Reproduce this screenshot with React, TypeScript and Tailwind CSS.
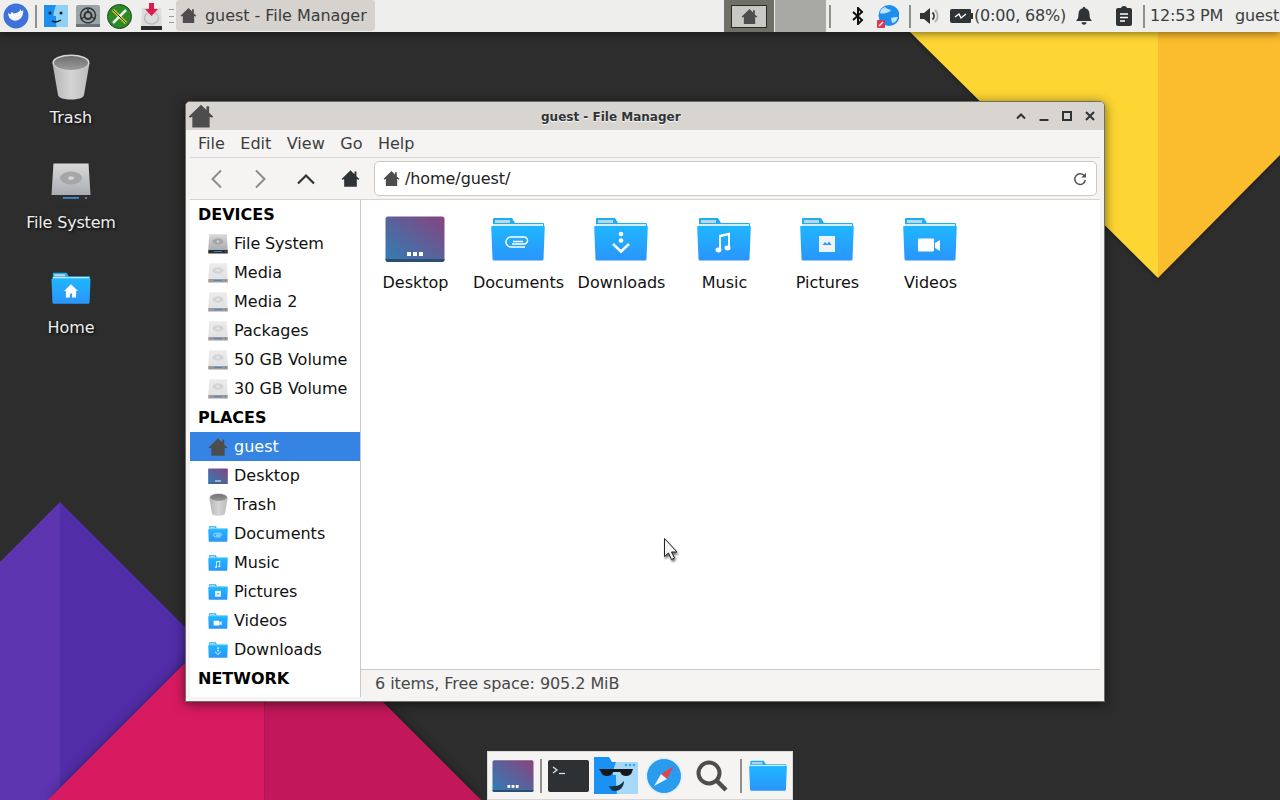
import { useId } from "react"

function Wallpaper() {
  return (
    <svg className="absolute inset-0" width="1280" height="800" viewBox="0 0 1280 800">
      <polygon points="60,502 0,562 0,800 60,800" fill="#5e35b1" />
      <polygon points="60,502 360,802 60,802" fill="#512da8" />
      <g className="drop-shadow-[0_0_6px_rgba(0,0,0,0.35)]">
        <polygon points="264.5,583.5 48,800 264.5,800" fill="#d81b60" />
        <polygon points="264.5,583.5 481,800 264.5,800" fill="#c2185b" />
      </g>
      <g className="drop-shadow-[0_1px_2px_rgba(0,0,0,0.4)]">
        <polygon points="910,32 1158,278 1158,32" fill="#fdd633" />
        <polygon points="1158,32 1158,278 1280,155 1280,32" fill="#fbbc2d" />
      </g>
    </svg>
  )
}

function HomeIcon({ size = 24, color = "#4d4d4d", className = "" }: { size?: number; color?: string; className?: string }) {
  return (
    <svg width={size} height={size} viewBox="0 0 24 24" className={className}>
      <path d="M12 1.500 .8 12.500l.9 1 2.300-.7V22.500h16V12.800l2.300.7.900-1L19.500 9V3H17v3.500z" fill={color} />
    </svg>
  )
}

function FolderGlyph({ kind }: { kind: string }) {
  const w = "#ffffff"
  if (kind === "clip")
    return <path d="M21 27.500h12a3.500 3.500 0 0 0 0-7H20a5 5 0 0 0 0 10h14M22 25h10" fill="none" stroke={w} strokeWidth="1.500" transform="translate(0,-.5)" />
  if (kind === "down")
    return (
      <g fill={w}>
        <circle cx="27" cy="17" r="2.300" />
        <circle cx="27" cy="23.500" r="2.300" />
        <path d="M19 27l8 7.500 8-7.500" fill="none" stroke={w} strokeWidth="2.400" />
      </g>
    )
  if (kind === "music")
    return (
      <g fill={w}>
        <path d="M22 18l11-2.500v15h-2v-12l-7 1.600v13h-2z" />
        <ellipse cx="21.500" cy="33" rx="3" ry="2.400" />
        <ellipse cx="30.500" cy="31" rx="3" ry="2.400" />
      </g>
    )
  if (kind === "picture")
    return (
      <g>
        <rect x="19" y="19" width="16" height="16" fill="#eef3f8" />
        <path d="M22.500 28l2.500-3 2 2 2-2.500 2.500 3.500z" fill="#2b9af5" />
      </g>
    )
  if (kind === "video")
    return <path d="M16 21.500h14a1 1 0 0 1 1 1v11a1 1 0 0 1-1 1H16a1 1 0 0 1-1-1v-11a1 1 0 0 1 1-1zM32 26l5-3v11l-5-3z" fill={w} />
  if (kind === "home")
    return <path d="M27 17l-9.500 9h2.500v9h5.500v-5.500h3V35H34v-9h2.500z" fill={w} />
  return null
}

function Folder({ kind, width, height }: { kind?: string; width: number; height: number }) {
  const id = useId()
  return (
    <svg width={width} height={height} viewBox="0 0 54 44">
      <defs>
        <linearGradient id={id} x1="0" y1="0" x2="0" y2="1">
          <stop offset="0" stopColor="#1fb6ff" />
          <stop offset="1" stopColor="#2a95fb" />
        </linearGradient>
      </defs>
      <path d="M2 8V2a1 1 0 0 1 1-1h18l3 5h28a1 1 0 0 1 1 1v3H2z" fill="#1cb0f0" />
      <rect x="4" y="3" width="15" height="3" fill="#bcd6e6" />
      <rect x="2" y="7" width="50" height="2" fill="#d6ecf8" />
      <path d="M1 9h52a.8.8 0 0 1 .8.8L52.500 42a1.500 1.500 0 0 1-1.500 1.500H3A1.500 1.500 0 0 1 1.500 42L.2 9.800A.8.8 0 0 1 1 9z" fill={`url(#${id})`} />
      {kind && <FolderGlyph kind={kind} />}
    </svg>
  )
}

function DesktopThumb({ width, height }: { width: number; height: number }) {
  const id = useId()
  return (
    <svg width={width} height={height} viewBox="0 0 60 46">
      <defs>
        <linearGradient id={id} x1="0" y1="1" x2="1" y2="0">
          <stop offset="0" stopColor="#2f7fb5" />
          <stop offset="1" stopColor="#87437f" />
        </linearGradient>
      </defs>
      <rect x="0.500" y="0.500" width="59" height="45" rx="2.500" fill={`url(#${id})`} />
      <path d="M.5 43h59v1a2 2 0 0 1-2 2h-55a2 2 0 0 1-2-2z" fill="#2a4d72" />
      <rect x="22" y="36" width="4" height="4" fill="#fff" />
      <rect x="28" y="36" width="4" height="4" fill="#fff" />
      <rect x="34" y="36" width="4" height="4" fill="#fff" />
    </svg>
  )
}

function Drive({ width, height, faded = false }: { width: number; height: number; faded?: boolean }) {
  const id = useId()
  return (
    <svg width={width} height={height} viewBox="0 0 40 40">
      <defs>
        <linearGradient id={id} x1="0" y1="0" x2="0" y2="1">
          <stop offset="0" stopColor={faded ? "#ececec" : "#d8d8d8"} />
          <stop offset="1" stopColor={faded ? "#e2e2e2" : "#a9adb3"} />
        </linearGradient>
      </defs>
      <path d="M2.500 0.500h35L39.500 32H.5z" fill={`url(#${id})`} />
      <ellipse cx="20" cy="15" rx="11" ry="6.500" fill={faded ? "#d4d4d4" : "#a6a6a6"} />
      <ellipse cx="20" cy="15" rx="3" ry="1.800" fill={faded ? "#ececec" : "#d4d4d4"} />
      <rect x=".5" y="32" width="39" height="7" fill={faded ? "#9b9b9b" : "#2e2e2e"} />
      <rect x="12" y="34" width="16" height="1.800" fill="#3f86d2" />
      <rect x="34" y="34" width="2" height="2" fill="#777" />
    </svg>
  )
}

function Trash({ width, height }: { width: number; height: number }) {
  const id = useId()
  const inner = useId()
  return (
    <svg width={width} height={height} viewBox="0 0 38 46">
      <defs>
        <linearGradient id={id} x1="0" y1="0" x2="1" y2="0">
          <stop offset="0" stopColor="#b5b5b5" />
          <stop offset=".5" stopColor="#d4d4d4" />
          <stop offset="1" stopColor="#bbbbbb" />
        </linearGradient>
        <linearGradient id={inner} x1="0" y1="0" x2="0" y2="1">
          <stop offset="0" stopColor="#6f6f6f" />
          <stop offset="1" stopColor="#9b9b9b" />
        </linearGradient>
      </defs>
      <path d="M.5 9 6 41c.5 3 6 4.500 13 4.500s12.500-1.500 13-4.500l5.500-32z" fill={`url(#${id})`} />
      <ellipse cx="19" cy="8.500" rx="18.500" ry="8" fill="#d6d6d6" />
      <ellipse cx="19" cy="9" rx="17" ry="7" fill={`url(#${inner})`} />
    </svg>
  )
}

function DesktopItem({ label, icon, iconHeight, tight }: { label: string; icon: React.ReactNode; iconHeight: string; tight?: boolean }) {
  return (
    <div className="flex h-[105px] w-[142px] flex-col items-center">
      <div className={`flex items-end justify-center ${iconHeight}`}>{icon}</div>
      <span className={`mt-auto mb-[27px] text-[16px] leading-5 text-[#eeeeee] [text-shadow:1px_1px_3px_#000000] ${tight ? "tracking-[-0.18px]" : ""}`}>{label}</span>
    </div>
  )
}

function PanelSep() {
  return <div className="h-[23px] w-[2px] shrink-0 bg-[#8f8f8b]" />
}

function TopPanel() {
  return (
    <div className="absolute top-0 left-0 flex h-8 w-[1280px] items-center overflow-hidden bg-[#eeeeec] text-[16px] text-[#3a3d3e] shadow-[0_2px_8px_rgba(0,0,0,0.45)]">
      <svg width="26" height="26" viewBox="0 0 26 26" className="ml-[3px] shrink-0">
        <circle cx="13" cy="13" r="12.500" fill="#3f72d9" />
        <path d="M5 9.500c.8 1.200 1.600 1.800 2.400 1.600 .6-.2.800-2 1.600-2.100 .8 0 1 1.200 1.600 1.500 2.400-.2 4.500-1.200 6-2.500l1.200-2 .4 2.400 2-1.400c.3 3.500-.5 6.500-3 8.800-2 1.800-5 2.500-7.500 1.500C6.500 15.800 5 13 5 9.500z" fill="#f4f6fb" />
      </svg>
      <div className="ml-[6px] shrink-0"><PanelSep /></div>
      <svg width="24" height="22" viewBox="0 0 24 22" className="ml-[7px] shrink-0">
        <rect width="24" height="22" y="0" fill="#8fd0f5" />
        <path d="M0 0h12c-1.500 4-2.500 8-2.500 11H12c0 4 0 8 .5 11H0z" fill="#1b8ff0" />
        <circle cx="6" cy="8" r="1.500" fill="#123" />
        <circle cx="17" cy="8" r="1.500" fill="#123" />
        <path d="M8 16c3 1.500 6 1 9-1" stroke="#123" strokeWidth="1.500" fill="none" />
      </svg>
      <svg width="24" height="22" viewBox="0 0 24 22" className="ml-[8px] shrink-0">
        <rect width="24" height="22" rx="2" fill="#9aa3a6" />
        <rect y="19" width="24" height="3" fill="#6d7477" />
        <circle cx="12" cy="10.500" r="7.500" fill="none" stroke="#2f3335" strokeWidth="1.500" />
        <circle cx="12" cy="10.500" r="3.500" fill="none" stroke="#2f3335" strokeWidth="2" />
        <path d="M12 3v4M5 14l3-2M19 14l-3-2" stroke="#2f3335" strokeWidth="1.500" />
      </svg>
      <svg width="25" height="25" viewBox="0 0 25 25" className="ml-[7px] shrink-0">
        <circle cx="12.500" cy="12.500" r="12" fill="#2c8a2a" stroke="#25401f" />
        <path d="M6 6l13 13" stroke="#e8d21f" strokeWidth="3" />
        <path d="M19 6 6 19" stroke="#e9edec" strokeWidth="2.500" />
        <path d="M6 6l13 13" stroke="#2a2a2a" strokeWidth="1" />
      </svg>
      <svg width="23" height="27" viewBox="0 0 23 27" className="ml-[8px] shrink-0">
        <path d="M2 5h19l1 18H1z" fill="#dcdcdc" />
        <ellipse cx="11.500" cy="15" rx="7" ry="6" fill="none" stroke="#bdbdbd" strokeWidth="1.500" />
        <rect x="1" y="23" width="21" height="4" fill="#2b2b2b" />
        <path d="M9 0h5v6h4l-6.500 7L5 6h4z" fill="#e01b4f" />
      </svg>
      <div className="ml-[6px] flex h-[14px] w-[5px] shrink-0 flex-col justify-between">
        <div className="h-px bg-[#9a9a9a]" />
        <div className="h-px bg-[#9a9a9a]" />
        <div className="h-px bg-[#9a9a9a]" />
      </div>
      <div className="ml-[2px] flex h-[31px] w-[199px] shrink-0 items-center self-start rounded bg-[#d6d2cd] pl-[4px]">
        <HomeIcon size={17} />
        <span className="ml-[8px] tracking-[-0.05px] whitespace-nowrap">guest - File Manager</span>
      </div>
      <div className="ml-[349px] flex h-8 w-[50px] shrink-0 items-center justify-center bg-[#6f6f68]">
        <div className="flex h-[23px] w-[36px] items-center justify-center border border-[#2a2a2a] bg-[#c9c9c3]">
          <HomeIcon size={17} />
        </div>
      </div>
      <div className="ml-px h-8 w-[51px] shrink-0 bg-[#a8a8a4]" />
      <div className="ml-[3px] shrink-0"><PanelSep /></div>
      <svg width="14" height="18" viewBox="0 0 14 18" className="ml-[20px] shrink-0">
        <path d="M2 5l9 8-4 4V1l4 4-9 8" fill="none" stroke="#111" strokeWidth="2" />
      </svg>
      <svg width="22" height="23" viewBox="0 0 22 23" className="ml-[12px] shrink-0">
        <circle cx="12" cy="10.500" r="10.500" fill="#1d8df0" />
        <path d="M8 2c2 2 4 2 6 3-1 2-3 2-5 3-2 .5-4 1-6 0 0-3 2-5 5-6zM14 13c2-1 5-1 7-1-1 3-3 6-6 6z" fill="#bfe3fb" />
        <rect x="0" y="15" width="8" height="8" rx="1" fill="#e2334f" />
        <path d="M2 21l4-4" stroke="#fff" strokeWidth="1.500" />
      </svg>
      <div className="ml-[10px] shrink-0"><PanelSep /></div>
      <svg width="20" height="18" viewBox="0 0 20 18" className="ml-[9px] shrink-0">
        <path d="M0 6h4l6-5v16l-6-5H0z" fill="#2e3436" />
        <path d="M12.500 5.500c2 2 2 5 0 7" fill="none" stroke="#2e3436" strokeWidth="1.800" />
        <path d="M15 3c3.500 3 3.500 9 0 12" fill="none" stroke="#b0b0b0" strokeWidth="1.800" />
      </svg>
      <svg width="23" height="14" viewBox="0 0 23 14" className="ml-[10px] shrink-0">
        <path d="M2 0h18a1 1 0 0 1 1 1v3h2v6h-2v3a1 1 0 0 1-1 1H2a2 2 0 0 1-2-2V2a2 2 0 0 1 2-2z" fill="#2e3436" />
        <path d="M5 8l4-3 2 4 5-4" fill="none" stroke="#fff" strokeWidth="1.400" />
      </svg>
      <span className="ml-[1px] w-[92px] shrink-0 tracking-[-0.2px] whitespace-nowrap">(0:00, 68%)</span>
      <svg width="16" height="18" viewBox="0 0 16 18" className="ml-[10px] shrink-0">
        <path d="M8 0c.8 0 1.300.5 1.300 1.300C12 2 13.500 4 13.500 7c0 4 1 5.500 2.500 7H0c1.500-1.500 2.500-3 2.500-7 0-3 1.500-5 4.200-5.700C6.700.5 7.200 0 8 0z" fill="#2e3436" />
        <path d="M5.500 15.300h5c0 1.500-1 2.500-2.500 2.500s-2.500-1-2.500-2.500z" fill="#2e3436" />
      </svg>
      <svg width="16" height="20" viewBox="0 0 16 20" className="ml-[24px] shrink-0">
        <path d="M2 2h3c0-1 1.300-2 3-2s3 1 3 2h3a2 2 0 0 1 2 2v14a2 2 0 0 1-2 2H2a2 2 0 0 1-2-2V4a2 2 0 0 1 2-2z" fill="#2e3436" />
        <path d="M4 8h8M4 11.500h8M4 15h5" stroke="#fff" strokeWidth="1.500" />
      </svg>
      <div className="ml-[11px] shrink-0"><PanelSep /></div>
      <span className="ml-[5px] w-[73px] shrink-0 tracking-[-0.2px] whitespace-nowrap">12:53 PM</span>
      <span className="ml-[12px] shrink-0 tracking-[-0.1px] whitespace-nowrap">guest</span>
    </div>
  )
}

function TitleButtons() {
  return (
    <div className="flex items-center gap-[11px] pr-[8px]">
      <svg width="12" height="12" viewBox="0 0 12 12"><path d="M2 8.500l4-4 4 4" fill="none" stroke="#2e3436" strokeWidth="2" /></svg>
      <svg width="12" height="12" viewBox="0 0 12 12"><rect x="1.500" y="9" width="9" height="2" fill="#2e3436" /></svg>
      <svg width="12" height="12" viewBox="0 0 12 12"><rect x="2" y="2" width="8" height="8" fill="none" stroke="#2e3436" strokeWidth="2" /></svg>
      <svg width="12" height="12" viewBox="0 0 12 12"><path d="M2 2l8 8M10 2l-8 8" stroke="#2e3436" strokeWidth="2" /></svg>
    </div>
  )
}

const menu = ["File", "Edit", "View", "Go", "Help"]

const devices = ["File System", "Media", "Media 2", "Packages", "50 GB Volume", "30 GB Volume"]

const places: { label: string; kind: string; selected?: boolean }[] = [
  { label: "guest", kind: "home", selected: true },
  { label: "Desktop", kind: "desktop" },
  { label: "Trash", kind: "trash" },
  { label: "Documents", kind: "clip" },
  { label: "Music", kind: "music" },
  { label: "Pictures", kind: "picture" },
  { label: "Videos", kind: "video" },
  { label: "Downloads", kind: "down" },
]

const files = [
  { label: "Desktop", kind: "desktop" },
  { label: "Documents", kind: "clip" },
  { label: "Downloads", kind: "down" },
  { label: "Music", kind: "music" },
  { label: "Pictures", kind: "picture" },
  { label: "Videos", kind: "video" },
]

function SideHeader({ label }: { label: string }) {
  return <div className="flex h-[29px] items-center pl-2 font-bold text-black">{label}</div>
}

function PlaceIcon({ kind }: { kind: string }) {
  if (kind === "home") return <HomeIcon size={22} />
  if (kind === "desktop") return <DesktopThumb width={22} height={18} />
  if (kind === "trash") return <Trash width={19} height={23} />
  return <Folder kind={kind} width={20} height={16} />
}

function Sidebar() {
  return (
    <div className="w-[171px] shrink-0 overflow-hidden border-r border-[#cdc7c2] bg-white text-[16px] text-[#111111]">
      <SideHeader label="DEVICES" />
      {devices.map((d, i) => (
        <div key={d} className="flex h-[29px] items-center">
          <div className="ml-[18px] flex w-[20px] justify-center">
            <Drive width={20} height={20} faded={i > 0} />
          </div>
          <span className={`ml-[6px] ${i === 0 ? "tracking-[-0.18px]" : ""}`}>{d}</span>
        </div>
      ))}
      <SideHeader label="PLACES" />
      {places.map((p) => (
        <div key={p.label} className={`flex h-[29px] items-center ${p.selected ? "bg-[#3584e4] text-white" : ""}`}>
          <div className="ml-[18px] flex w-[20px] justify-center">
            <PlaceIcon kind={p.kind} />
          </div>
          <span className="ml-[6px]">{p.label}</span>
        </div>
      ))}
      <SideHeader label="NETWORK" />
    </div>
  )
}

function FileItem({ label, kind }: { label: string; kind: string }) {
  return (
    <div className="flex w-[103px] flex-col items-center">
      <div className="flex h-[46px] items-center justify-center pr-[2px]">
        {kind === "desktop" ? <DesktopThumb width={60} height={46} /> : <Folder kind={kind} width={54} height={44} />}
      </div>
      <span className="mt-[11px] text-[16px] leading-5 text-[#111111]">{label}</span>
    </div>
  )
}

function FileManager() {
  return (
    <div className="absolute top-[101px] left-[185px] flex h-[601px] w-[920px] flex-col overflow-hidden rounded-t-[5px] border border-[#6e6e6c] bg-[#f5f4f2] text-[16px] text-[#3a3d3e] shadow-[0_2px_12px_rgba(0,0,0,0.55)]">
      <div className="flex h-[28px] shrink-0 items-center justify-between bg-[#d8d4d0]">
        <HomeIcon size={26} className="ml-[2px]" />
        <span className="absolute left-[355px] mt-[2px] text-[12px] font-bold whitespace-nowrap text-[#2e3436] [text-shadow:0_1px_1px_#ffffff]">guest - File Manager</span>
        <TitleButtons />
      </div>
      <div className="flex h-[27px] shrink-0 items-center gap-[15.500px] pl-[12px]">
        {menu.map((m) => (
          <span key={m}>{m}</span>
        ))}
      </div>
      <div className="mx-[4px] flex h-[43px] shrink-0 items-center border-y border-[#d8d4d0] pr-[3px]">
        <svg width="16" height="20" viewBox="0 0 16 20" className="ml-[19px]"><path d="M12 1.500 3.500 10l8.500 8.500" fill="none" stroke="#8a8d8e" strokeWidth="2" /></svg>
        <svg width="16" height="20" viewBox="0 0 16 20" className="ml-[27px]"><path d="M4 1.500 12.500 10 4 18.500" fill="none" stroke="#8a8d8e" strokeWidth="2" /></svg>
        <svg width="20" height="12" viewBox="0 0 20 12" className="ml-[28px]"><path d="M2 10.500l8-8 8 8" fill="none" stroke="#2e3436" strokeWidth="2.200" /></svg>
        <HomeIcon size={19} color="#2e3436" className="ml-[25px]" />
        <div className="ml-[14px] flex h-[35px] flex-1 items-center rounded-[5px] border border-[#cdc7c2] bg-white pl-[8px]">
          <HomeIcon size={17} />
          <span className="ml-[5px] tracking-[-0.08px] text-[#222222]">/home/guest/</span>
          <svg width="14" height="14" viewBox="0 0 14 14" className="mr-[9px] ml-auto">
            <path d="M11.500 4.200A5.300 5.300 0 1 0 12.300 8" fill="none" stroke="#555" strokeWidth="1.500" />
            <path d="M13 .8v4.700H8.300z" fill="#555" />
          </svg>
        </div>
      </div>
      <div className="mx-[4px] flex min-h-0 flex-1">
        <Sidebar />
        <div className="flex min-w-0 flex-1 flex-col">
          <div className="flex flex-1 items-start bg-white pt-[16px] pl-[3px]">
            {files.map((f) => (
              <FileItem key={f.label} label={f.label} kind={f.kind} />
            ))}
          </div>
          <div className="flex h-[28px] shrink-0 items-center border-t border-[#cdc7c2] pl-[14px] tracking-[-0.07px] text-[#454849]">6 items, Free space: 905.2 MiB</div>
        </div>
      </div>
      <div className="h-[4px] shrink-0" />
    </div>
  )
}

function Dock() {
  return (
    <div className="absolute top-[751px] left-[487px] flex h-[49px] w-[306px] items-center border border-[#d8d8d8] bg-[#f5f4f2] pl-[4px]">
      <DesktopThumb width={42} height={32} />
      <div className="ml-[6px] h-[34px] w-[2px] bg-[#8f8f8b]" />
      <svg width="41" height="32" viewBox="0 0 41 32" className="ml-[6px]">
        <rect width="41" height="32" rx="2" fill="#2e3133" />
        <path d="M5 7l4 3-4 3" fill="none" stroke="#e8e8e8" strokeWidth="1.200" />
        <path d="M11 13.500h6" stroke="#e8e8e8" strokeWidth="1.200" />
      </svg>
      <svg width="44" height="37" viewBox="0 0 44 37" className="ml-[5px]">
        <rect width="44" height="32" y="5" fill="#a6d8fa" />
        <path d="M0 0h15l3 5h4c-2 4-3 9-3 13h3c0 7 0 13 1 19H0z" fill="#1b90f5" />
        <path d="M5 12h34l-1 3c-1 4-6 5-10 3l-2-3h-7l-2 3c-4 2-9 1-10-3z" fill="#16191b" />
        <path d="M15 29c5 1 11 0 15-5 0 6-4 10-9 10-3 0-5-2-6-5z" fill="#16303f" />
        <circle cx="36" cy="8" r="1.200" fill="#3ba4f0" />
        <circle cx="40" cy="8" r="1.200" fill="#3ba4f0" />
        <circle cx="32" cy="8" r="1.200" fill="#3ba4f0" />
      </svg>
      <svg width="38" height="38" viewBox="0 0 38 38" className="ml-[7px]">
        <circle cx="19" cy="19" r="19" fill="#eceff1" />
        <circle cx="19" cy="19" r="17" fill="#2a9cf0" />
        <path d="M29 9 16 17l6 5z" fill="#e2434f" />
        <path d="M9 29l7-12 6 5z" fill="#f2f4f5" />
      </svg>
      <svg width="34" height="34" viewBox="0 0 34 34" className="ml-[12px]">
        <circle cx="14" cy="14" r="10.500" fill="none" stroke="#4d4d4d" strokeWidth="4" />
        <path d="M22 22l9 9" stroke="#4d4d4d" strokeWidth="4.500" />
      </svg>
      <div className="ml-[11px] h-[34px] w-[2px] bg-[#8f8f8b]" />
      <div className="ml-[7px]"><Folder width={38} height={31} /></div>
    </div>
  )
}

export default function App() {
  return (
    <div className="relative h-[800px] w-[1280px] overflow-hidden bg-[#2d2d2d] font-['DejaVu_Sans',sans-serif]">
      <Wallpaper />
      <TopPanel />
      <div className="absolute top-[50px] left-0 flex flex-col">
        <DesktopItem label="Trash" iconHeight="h-[50px]" icon={<Trash width={38} height={46} />} />
        <DesktopItem label="File System" tight iconHeight="h-[48px]" icon={<Drive width={40} height={40} />} />
        <DesktopItem label="Home" iconHeight="h-[44px]" icon={<Folder kind="home" width={40} height={32} />} />
      </div>
      <FileManager />
      <Dock />
      <svg width="18" height="26" viewBox="0 0 18 26" className="absolute top-[537px] left-[663px] drop-shadow-[1px_2px_1px_rgba(0,0,0,0.6)]">
        <path d="M1.500 1.500v18l4-3.500 3 6.500 3-1.500-3-6h5.500z" fill="#f4f4f4" stroke="#222" strokeWidth="1" />
      </svg>
    </div>
  )
}
